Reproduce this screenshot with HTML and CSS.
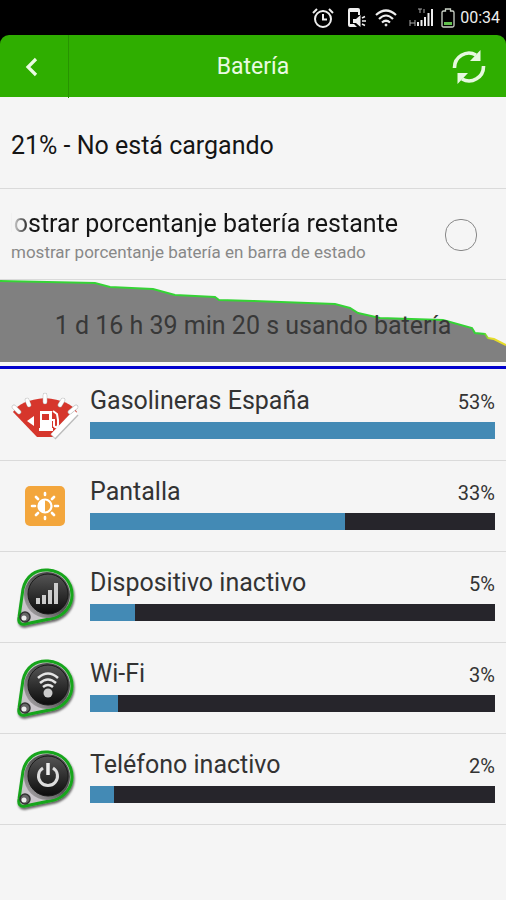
FILE: index.html
```html
<!DOCTYPE html>
<html lang="es">
<head>
<meta charset="utf-8">
<meta name="viewport" content="width=device-width, initial-scale=1">
<title>Batería</title>
<link rel="stylesheet" href="styles.css">
</head>
<body>
<svg width="0" height="0" class="defs" aria-hidden="true">
  <defs>
    <linearGradient id="disc" x1="0" y1="0" x2="0" y2="1"><stop offset="0" stop-color="#555"/><stop offset=".5" stop-color="#303030"/><stop offset="1" stop-color="#0c0c0c"/></linearGradient>
    <linearGradient id="rim" x1="1" y1="0" x2="0" y2="1"><stop offset="0" stop-color="#444"/><stop offset=".5" stop-color="#555"/><stop offset="1" stop-color="#b8b4b8"/></linearGradient>
    <linearGradient id="level" gradientUnits="userSpaceOnUse" x1="0" y1="0" x2="506" y2="0"><stop offset=".955" stop-color="#35d335"/><stop offset=".97" stop-color="#e6dc28"/></linearGradient>
    <filter id="shade" x="-20%" y="-20%" width="150%" height="150%"><feDropShadow dx="1" dy="2" stdDeviation="1.3" flood-color="#000" flood-opacity=".6"/></filter>
    <g id="badge">
      <path d="M8 52 L12 24 C15 11 25 4 37 5 C51 6 61 16 61 30 C61 41 53 50 43 53 L14 59 C9 60 7 57 8 52Z" fill="#c9c5ca" stroke="#17a51b" stroke-width="3" filter="url(#shade)"/>
      <circle cx="36" cy="30" r="23" fill="url(#rim)"/>
      <circle cx="37" cy="29" r="20" fill="url(#disc)" stroke="#1b1b1b"/>
      <circle cx="14" cy="52" r="5" fill="#666" stroke="#333" stroke-width="1.5"/>
      <circle cx="13" cy="53" r="2.5" fill="#eee"/>
    </g>
  </defs>
</svg>

<div class="status">
  <svg class="ic" width="22" height="22" viewBox="0 0 22 22" fill="none" stroke="#eee" stroke-width="2"><circle cx="11" cy="12" r="8"/><path d="M1 6 L5 2 M21 6 L17 2M11 7v5.500h4"/></svg>
  <svg class="ic phone" width="20" height="22" viewBox="0 0 20 22"><path d="M3 1h8q2 0 2 2v5h-2V5H3v12h4l3 3H3q-2 0-2-2V3q0-2 2-2Z" fill="#eee"/><path d="M6 12h3l4.500-4v12L9 16H6Z" fill="#eee"/><path d="M15 11l3-1.500M15 14h4M15 17l3 1.500" stroke="#eee" stroke-width="1.500"/></svg>
  <svg class="ic wifi" width="22" height="18" viewBox="0 0 22 18" fill="none" stroke="#eee" stroke-width="2.200"><path d="M1 6Q11-3 21 6M4 10Q11 3 18 10M7 13.500Q11 10 15 13.500"/><circle cx="11" cy="16" r="1" fill="#eee" stroke-width="1"/></svg>
  <svg class="ic signal" width="24" height="20" viewBox="0 0 24 20"><path d="M1 12v6M6 12v6M1 15h5M9 1h4M11 1v4M15 1v4" stroke="#aaa" stroke-width="1"/><path d="M8 14h2v4H8zM11.500 12h2v6h-2zM15 9h2v9h-2zM18.500 5h2v13h-2zM22 1h2v17h-2z" fill="#eee"/></svg>
  <svg class="ic" width="14" height="20" viewBox="0 0 14 20"><path d="M4.500 3V1h5v2h2q1.500 0 1.500 1.500v13q0 1.500-1.500 1.500h-9Q1 19 1 17.500v-13Q1 3 2.500 3Z" fill="none" stroke="#ccd3c8" stroke-width="1.300"/><path d="M3 14h8v3H3z" fill="#62c04e"/></svg>
  <time>00:34</time>
</div>

<header class="bar">
  <button class="back" aria-label="Atrás"><svg width="14" height="20" viewBox="0 0 14 20"><path d="M12 2 4 10l8 8" fill="none" stroke="#eafbe2" stroke-width="3.200"/></svg></button>
  <h1>Batería</h1>
  <button class="refresh" aria-label="Actualizar"><svg width="34" height="34" viewBox="0 0 34 34"><g fill="none" stroke="#e6f8df" stroke-width="3.600"><path d="M2.500 18A14.500 14.500 0 0 1 24 5"/><path d="M31.500 16A14.500 14.500 0 0 1 10 29"/></g><path d="M28.500 0v11H18Z M5.500 34V23H16Z" fill="#e6f8df"/></svg></button>
</header>

<main>
  <p class="row state">21% - No está cargando</p>
  <div class="row option">
    <label for="pct">
      <span class="marquee"><span>Mostrar porcentanje batería restante</span></span>
      <small>mostrar porcentanje batería en barra de estado</small>
    </label>
    <input type="checkbox" id="pct">
  </div>

  <section class="history">
    <svg viewBox="0 0 506 82" preserveAspectRatio="none" aria-hidden="true">
      <path d="M0 1 95 3 110 7 153 9 175 15 215 17 219 20 253 21 335 24 350 28 358 33 380 38 443 40 472 48 475 53 485 54 488 58 494 59 506 65V82H0Z" fill="#808080"/>
      <path d="M0 1 95 3 110 7 153 9 175 15 215 17 219 20 253 21 335 24 350 28 358 33 380 38 443 40 472 48 475 53 485 54 488 58 494 59 506 65" fill="none" stroke="url(#level)" stroke-width="2"/>
    </svg>
    <p>1 d 16 h 39 min 20 s usando batería</p>
  </section>

  <ul>
    <li>
      <svg class="app" width="68" height="66" viewBox="0 0 68 66"><path d="M2 29Q9 17 34 15Q59 17 66 29L42 54H26Z" fill="#d6362c"/><path d="M65 30 42 54" stroke="#bbb" stroke-width="7"/><path d="M65 29 42 53" stroke="#fff" stroke-width="5.500"/><g stroke="#bbb" stroke-width="4.500" stroke-linecap="round"><path d="M3 24l5 5M16 17l2 5M34 12v7M52 17l-3 5M65 24l-6 5"/></g><g stroke="#fff" stroke-width="3.500" stroke-linecap="round"><path d="M3 24l5 5M16 17l2 5M34 12v7M52 17l-3 5M65 24l-6 5"/></g><path d="M16 38l7-5v10Z" fill="#fff"/><path d="M29 28h12v17h1v3H28v-3h1Z" fill="#fff"/><path d="M31 31h7v6h-7z" fill="#d6362c"/><path d="M40 37h3v6q3 3 4-1v-5l-1-6-4-3" fill="none" stroke="#fff" stroke-width="2"/></svg>
      <div class="use"><div class="line"><h2>Gasolineras España</h2><span>53%</span></div><div class="meter"><i style="width:100%"></i></div></div>
    </li>
    <li>
      <svg class="app" width="68" height="66" viewBox="0 0 68 66"><rect x="14" y="12" width="40" height="40" rx="5" fill="#f3a63c"/><g stroke="#fff" stroke-width="2.600" stroke-linecap="round"><path d="M34 19v2M34 43v2M21 32h3M44 32h3M25 23l2 2M41 39l2 2M43 23l-2 2M27 39l-2 2"/></g><circle cx="34" cy="32" r="6.500" fill="#f3a63c" stroke="#fff" stroke-width="2.200"/><path d="M34 26a6 6 0 0 0 0 12Z" fill="#fff"/></svg>
      <div class="use"><div class="line"><h2>Pantalla</h2><span>33%</span></div><div class="meter"><i style="width:63%"></i></div></div>
    </li>
    <li>
      <svg class="app" width="68" height="66" viewBox="0 0 68 66"><use href="#badge"/><path d="M25 33h4v6h-4zM31 30h4v9h-4zM37 25h4v14h-4zM43 18h4v21h-4z" fill="#ccc"/></svg>
      <div class="use"><div class="line"><h2>Dispositivo inactivo</h2><span>5%</span></div><div class="meter"><i style="width:11%"></i></div></div>
    </li>
    <li>
      <svg class="app" width="68" height="66" viewBox="0 0 68 66"><use href="#badge"/><g fill="none" stroke="#e4e4e4" stroke-width="2.500"><path d="M27 22Q37 13 47 22M29 27Q37 20 45 27M32 31Q37 27 42 31"/></g><circle cx="37" cy="37" r="4.500" fill="#ccc"/></svg>
      <div class="use"><div class="line"><h2>Wi-Fi</h2><span>3%</span></div><div class="meter"><i style="width:7%"></i></div></div>
    </li>
    <li>
      <svg class="app" width="68" height="66" viewBox="0 0 68 66"><use href="#badge"/><path d="M32 21a9.500 9.500 0 1 0 10 0" fill="none" stroke="#ddd" stroke-width="3"/><path d="M37 16v12" stroke="#eee" stroke-width="3.500"/></svg>
      <div class="use"><div class="line"><h2>Teléfono inactivo</h2><span>2%</span></div><div class="meter"><i style="width:6%"></i></div></div>
    </li>
  </ul>
</main>
</body>
</html>
```

FILE: styles.css
```css
* { box-sizing: border-box; margin: 0; padding: 0; }
html { background: #f5f5f5; }
body { font-family: Roboto, sans-serif; color: #333; background: linear-gradient(#000, #000) 0 0 / 100% 60px no-repeat #f5f5f5; }
.defs { position: absolute; }
svg { display: block; flex: none; }

.status { display: flex; align-items: center; justify-content: flex-end; height: 35px; padding-right: 6px; color: #eee; }
.status .ic { margin-right: 8px; }
.status .ic:first-child { margin-right: 13px; }
.status .wifi { margin-right: 12px; }
.status time { font-size: 16px; line-height: 35px; margin-left: -3px; }

.bar { display: grid; grid-template-columns: 69px 1fr 69px; height: 62px; background: #2fae00; border-radius: 9px 9px 0 0; }
.bar h1 { font-size: 23px; line-height: 63px; font-weight: 400; text-align: center; color: #eafbe2; }
button { display: flex; align-items: center; background: none; border: 0; cursor: pointer; }
.back { justify-content: center; padding-right: 6px; border-right: 1px solid #279400; }
.refresh { justify-content: flex-end; padding-right: 20px; }

main { background: #f5f5f5; }
.row { border-bottom: 1px solid #dadada; color: #151515; }
.state { height: 92px; padding: 3px 11px 0; font-size: 25px; line-height: 91px; }
.option { display: flex; align-items: center; gap: 47px; height: 91px; padding: 2px 29px 0 11px; }
.option label { flex: 1; min-width: 0; }
.marquee { display: flex; justify-content: flex-end; overflow: hidden; font-size: 25px; line-height: 34px; white-space: nowrap; -webkit-mask-image: linear-gradient(90deg, transparent, #000 18px); mask-image: linear-gradient(90deg, transparent, #000 18px); }
.option small { display: block; font-size: 17px; line-height: 22px; color: #888; white-space: nowrap; }
.option input { appearance: none; flex: none; width: 32px; height: 32px; border: 1px solid #888; border-radius: 15px; }

.history { display: grid; height: 90px; background: linear-gradient(#0000cd, #0000cd) 0 86px / 100% 3px no-repeat; }
.history > * { grid-area: 1 / 1; }
.history svg { width: 100%; height: 82px; }
.history p { font-size: 25px; line-height: 92px; text-align: center; white-space: nowrap; color: #383838; }

ul { list-style: none; }
li { display: flex; gap: 11px; height: 91px; padding: 13px 11px 0; border-bottom: 1px solid #dadada; }
.use { flex: 1; min-width: 0; }
.line { display: flex; justify-content: space-between; align-items: baseline; line-height: 36px; margin-bottom: 2px; }
h2 { font-size: 25px; font-weight: 400; }
.line span { font-size: 20px; }
.meter { height: 17px; background: #26252b; }
.meter i { display: block; height: 100%; background: #438ab5; }
```
